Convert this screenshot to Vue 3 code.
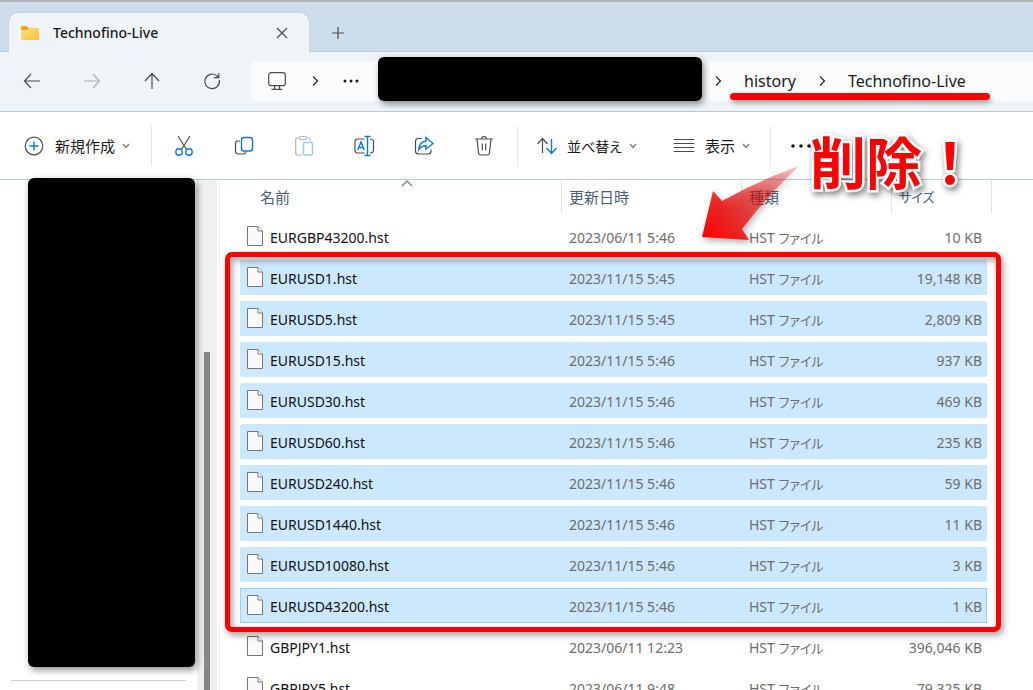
<template>
  <div class="explorer">
    <header class="tab-bar">
      <div class="tab">
        <svg class="folder" width="20" height="18" viewBox="0 0 20 18">
          <path d="M1 3.500Q1 2 2.500 2H6.500L9 4.500H17.500Q19 4.500 19 6V8H1Z" fill="#f0a30a" />
          <path d="M1 6H7L9 4.500H17.500Q19 4.500 19 6V14.500Q19 16 17.500 16H2.500Q1 16 1 14.500Z" fill="url(#folderFill)" />
          <defs>
            <linearGradient id="folderFill" x1="0" y1="0" x2="1" y2="1">
              <stop offset="0" stop-color="#ffe083" />
              <stop offset="1" stop-color="#fcbf36" />
            </linearGradient>
          </defs>
        </svg>
        <span class="tab-title">Technofino-Live</span>
        <button class="icon-btn close" aria-label="タブを閉じる">
          <svg width="12" height="12" viewBox="0 0 12 12"><path d="M1 1L11 11M11 1L1 11" /></svg>
        </button>
      </div>
      <button class="icon-btn add" aria-label="新しいタブ">
        <svg width="14" height="14" viewBox="0 0 14 14"><path d="M7 1V13M1 7H13" /></svg>
      </button>
    </header>

    <nav class="nav-bar">
      <div class="nav-buttons">
        <button class="icon-btn" aria-label="戻る">
          <svg width="18" height="18" viewBox="0 0 18 18"><path d="M17 9H2M8 2L1.500 9L8 16" /></svg>
        </button>
        <button class="icon-btn" aria-label="進む" disabled>
          <svg width="18" height="18" viewBox="0 0 18 18"><path d="M1 9H16M10 2L16.500 9L10 16" /></svg>
        </button>
        <button class="icon-btn" aria-label="上へ">
          <svg width="18" height="18" viewBox="0 0 18 18"><path d="M9 17V2M2 9L9 1.500L16 9" /></svg>
        </button>
        <button class="icon-btn" aria-label="更新">
          <svg width="18" height="18" viewBox="0 0 18 18"><path d="M16.300 8A7.300 7.300 0 1 1 13.500 3.500L15.500 5.500M15.800 1V5.700H11" /></svg>
        </button>
      </div>
      <div class="address">
        <svg class="pc" width="20" height="20" viewBox="0 0 20 20">
          <rect x="1.700" y="1.700" width="16.600" height="13" rx="2.500" />
          <path d="M7.500 15V18M12.500 15V18M4.500 18.300H15.500" />
        </svg>
        <svg class="sep" width="8" height="12" viewBox="0 0 8 12"><path d="M2 1.500L6.500 6L2 10.500" /></svg>
        <svg class="dots" width="16" height="4" viewBox="0 0 16 4"><circle cx="2" cy="2" r="1.500" /><circle cx="8" cy="2" r="1.500" /><circle cx="14" cy="2" r="1.500" /></svg>
        <div class="mask path-mask"></div>
        <svg class="sep" width="8" height="12" viewBox="0 0 8 12"><path d="M2 1.500L6.500 6L2 10.500" /></svg>
        <div class="crumbs">
          <a href="#">history</a>
          <svg class="sep" width="8" height="12" viewBox="0 0 8 12"><path d="M2 1.500L6.500 6L2 10.500" /></svg>
          <a href="#">Technofino-Live</a>
          <span class="underline"></span>
        </div>
      </div>
    </nav>

    <div class="toolbar">
      <button class="tool-btn new">
        <svg width="20" height="20" viewBox="0 0 20 20">
          <circle cx="10" cy="10" r="8.800" />
          <path class="blue" d="M10 5.500V14.500M5.500 10H14.500" />
        </svg>
        <span>新規作成</span>
        <svg class="caret" width="8" height="6" viewBox="0 0 8 6"><path d="M1 1L4 4.500L7 1" /></svg>
      </button>
      <span class="divider"></span>
      <div class="actions">
        <button class="icon-btn" aria-label="切り取り">
          <svg width="20" height="22" viewBox="0 0 20 22">
            <path d="M4 1L12.500 14.500M16 1L7.500 14.500" />
            <circle class="blue" cx="5" cy="17" r="3.200" />
            <circle class="blue" cx="15" cy="17" r="3.200" />
          </svg>
        </button>
        <button class="icon-btn" aria-label="コピー">
          <svg width="20" height="22" viewBox="0 0 20 22">
            <path d="M6 6H4Q1.500 6 1.500 8.500V16Q1.500 19 4.500 19H9Q11.500 19 12 16.500" />
            <rect class="blue" x="7.500" y="2.500" width="11" height="13.500" rx="2.500" />
          </svg>
        </button>
        <button class="icon-btn" aria-label="貼り付け" disabled>
          <svg width="20" height="22" viewBox="0 0 20 22">
            <path d="M8 20H3.500Q1.700 20 1.700 18V5Q1.700 3 3.500 3H5.500M12.500 3H14.500Q16.300 3 16.300 5V6" />
            <rect x="5.500" y="1.500" width="7" height="3" rx="1.500" />
            <rect class="blue" x="9.500" y="7.500" width="9" height="12.500" rx="1.500" />
          </svg>
        </button>
        <button class="icon-btn" aria-label="名前の変更">
          <svg width="22" height="22" viewBox="0 0 22 22">
            <path d="M11.500 18H4.500Q2 18 2 15.500V6.500Q2 4 4.500 4H11.500M17 4Q20.500 4 20.500 7V15Q20.500 18 17 18" />
            <path class="blue" d="M4.800 15L8 7L11.200 15M6 12.500H10M14.500 1.500V20.500M11.500 1.500H17.500M11.500 20.500H17.500" />
          </svg>
        </button>
        <button class="icon-btn" aria-label="共有">
          <svg width="20" height="22" viewBox="0 0 20 22">
            <path d="M8 3.500H4.500Q1.500 3.500 1.500 6.500V16Q1.500 19 4.500 19H14Q17 19 17 16V14.500" />
            <path class="blue" d="M12 2.500L19 8.500L12 14V10.700Q7.500 10.500 4.800 14.500Q5.300 7 12 6Z" />
          </svg>
        </button>
        <button class="icon-btn" aria-label="削除">
          <svg width="20" height="22" viewBox="0 0 20 22">
            <path d="M1 4H19M3 4L4.500 17.500Q4.800 20 7 20H13Q15.200 20 15.500 17.500L17 4M7.500 4Q7.500 1.500 10 1.500Q12.500 1.500 12.500 4M8.300 8.500V15.500M11.700 8.500V15.500" />
          </svg>
        </button>
      </div>
      <span class="divider"></span>
      <button class="tool-btn sort">
        <svg width="22" height="18" viewBox="0 0 22 18">
          <path d="M6.500 16V2M1.500 7L6.500 1.500L11.500 7" />
          <path class="blue" d="M15.500 2V16M10.500 11L15.500 16.500L20.500 11" />
        </svg>
        <span>並べ替え</span>
        <svg class="caret" width="8" height="6" viewBox="0 0 8 6"><path d="M1 1L4 4.500L7 1" /></svg>
      </button>
      <button class="tool-btn view">
        <svg width="20" height="14" viewBox="0 0 20 14"><path d="M0 .5H20M0 4.500H20M0 8.500H20M0 12.500H20" /></svg>
        <span>表示</span>
        <svg class="caret" width="8" height="6" viewBox="0 0 8 6"><path d="M1 1L4 4.500L7 1" /></svg>
      </button>
      <span class="divider"></span>
      <button class="icon-btn more" aria-label="もっと見る">
        <svg class="dots" width="20" height="4" viewBox="0 0 20 4"><circle cx="2" cy="2" r="1.800" /><circle cx="10" cy="2" r="1.800" /><circle cx="18" cy="2" r="1.800" /></svg>
      </button>
    </div>

    <div class="content">
      <aside class="sidebar">
        <div class="mask side-mask"></div>
        <hr>
      </aside>
      <div class="scrollbar"><div class="thumb"></div></div>
      <main class="files">
        <table>
          <thead>
            <tr>
              <th class="name">
                名前
                <svg class="sort-mark" width="12" height="7" viewBox="0 0 12 7"><path d="M1 6L6 1L11 6" /></svg>
              </th>
              <th class="date">更新日時</th>
              <th class="type">種類</th>
              <th class="size"><span class="kana">サイズ</span></th>
            </tr>
          </thead>
          <tbody>
            <tr
              v-for="file in files"
              :key="file.name"
              :class="{ selected: file.selected, focused: file.name === focused }"
            >
              <td class="name">
                <div class="file-name">
                  <svg width="17" height="20" viewBox="0 0 17 20">
                    <path d="M.5.500H11L15.500 5V19.500H.5Z" />
                    <path d="M11 .5V5H15.500" />
                  </svg>
                  <span>{{ file.name }}</span>
                </div>
              </td>
              <td class="date">{{ file.date }}</td>
              <td class="type">HST <span class="kana">ファイル</span></td>
              <td class="size">{{ file.size }} KB</td>
            </tr>
          </tbody>
        </table>
        <div class="frame"></div>
        <svg class="arrow" width="110" height="84" viewBox="0 0 110 84">
          <defs>
            <linearGradient id="arrowFill" gradientUnits="userSpaceOnUse" x1="6" y1="74" x2="102" y2="3">
              <stop offset="0" stop-color="#f00" />
              <stop offset=".3" stop-color="#f01010" stop-opacity=".85" />
              <stop offset="1" stop-color="#d00" stop-opacity=".2" />
            </linearGradient>
          </defs>
          <path d="M6 75L17 29L26 39Q63 18 103 4Q73 32 46 67L53 78Z" fill="url(#arrowFill)" />
        </svg>
        <strong class="note">削除！</strong>
      </main>
    </div>
  </div>
</template>

<script setup>
const focused = 'EURUSD43200.hst'

const files = [
  { name: 'EURGBP43200.hst', date: '2023/06/11 5:46', size: '10', selected: false },
  { name: 'EURUSD1.hst', date: '2023/11/15 5:45', size: '19,148', selected: true },
  { name: 'EURUSD5.hst', date: '2023/11/15 5:45', size: '2,809', selected: true },
  { name: 'EURUSD15.hst', date: '2023/11/15 5:46', size: '937', selected: true },
  { name: 'EURUSD30.hst', date: '2023/11/15 5:46', size: '469', selected: true },
  { name: 'EURUSD60.hst', date: '2023/11/15 5:46', size: '235', selected: true },
  { name: 'EURUSD240.hst', date: '2023/11/15 5:46', size: '59', selected: true },
  { name: 'EURUSD1440.hst', date: '2023/11/15 5:46', size: '11', selected: true },
  { name: 'EURUSD10080.hst', date: '2023/11/15 5:46', size: '3', selected: true },
  { name: 'EURUSD43200.hst', date: '2023/11/15 5:46', size: '1', selected: true },
  { name: 'GBPJPY1.hst', date: '2023/06/11 12:23', size: '396,046', selected: false },
  { name: 'GBPJPY5.hst', date: '2023/06/11 9:48', size: '79,325', selected: false },
]
</script>

<style>
body {
  margin: 0;
  background: #fff;
}
</style>

<style scoped>
.explorer {
  display: flex;
  flex-direction: column;
  height: 100vh;
  overflow: hidden;
  font-family: "Noto Sans", "Noto Sans CJK JP", sans-serif;
  font-size: 14px;
  color: #1b1b1b;
}

svg {
  flex: none;
  fill: none;
  stroke: #4c4c4c;
  stroke-width: 1.2;
}

button {
  display: flex;
  align-items: center;
  padding: 0;
  border: none;
  background: none;
  font: inherit;
  color: inherit;
  cursor: pointer;
}

.icon-btn {
  justify-content: center;
}

.icon-btn:disabled {
  opacity: 0.4;
}

.blue {
  stroke: #0f78d4;
  stroke-width: 1.4;
}

.dots {
  fill: #1b1b1b;
  stroke: none;
}

.mask {
  background: #000;
  border-radius: 6px;
  box-shadow: 2px 3px 7px rgba(0, 0, 0, 0.45);
}

/* tabs */
.tab-bar {
  display: flex;
  align-items: flex-end;
  flex: none;
  height: 52px;
  padding-left: 9px;
  box-sizing: border-box;
  border-top: 2px solid #b4b4b4;
  background: #cdddeb;
  box-shadow: inset 0 -1px #b9cbda;
}

.tab {
  display: flex;
  align-items: center;
  width: 300px;
  height: 39px;
  padding: 0 21px 0 11px;
  box-sizing: border-box;
  border-radius: 9px 9px 0 0;
  background: #eff4f9;
  box-shadow: 0 0 2px #b4c5d4;
}

.folder {
  stroke: none;
}

.tab-title {
  flex: 1;
  margin-left: 13px;
  font-weight: 500;
}

.add {
  width: 40px;
  height: 38px;
  margin-left: 9px;
}

/* navigation */
.nav-bar {
  display: flex;
  align-items: center;
  flex: none;
  height: 60px;
  padding-bottom: 1px;
  box-sizing: border-box;
  border-bottom: 1px solid #b8c9d8;
  background: #eff4f9;
}

.nav-buttons {
  display: flex;
  width: 250px;
  padding-left: 2px;
  box-sizing: border-box;
}

.nav-buttons .icon-btn {
  width: 60px;
  height: 40px;
}

.address {
  display: flex;
  align-items: center;
  flex: 1;
  height: 40px;
  padding-left: 17px;
  border-radius: 6px 0 0 6px;
  background: #fbfcfe;
}

.pc {
  margin-right: 24px;
}

.sep {
  stroke: #222;
}

.address > .dots {
  margin: 0 19px 0 24px;
}

.path-mask {
  width: 324px;
  height: 44px;
  margin: 0 12px 4px 0;
}

.crumbs {
  position: relative;
  display: flex;
  align-items: center;
  gap: 22px;
  height: 40px;
  margin-left: 22px;
  font-size: 16px;
}

.crumbs a {
  color: inherit;
  text-decoration: none;
}

.underline {
  position: absolute;
  left: -14px;
  right: -24px;
  bottom: 1px;
  height: 7px;
  border-radius: 4px;
  background: #f00;
  box-shadow: 1px 3px 5px rgba(0, 0, 0, 0.35);
}

/* commands */
.toolbar {
  display: flex;
  align-items: center;
  flex: none;
  height: 68px;
  box-sizing: border-box;
  border-bottom: 1px solid #b8c9d8;
  background: #fff;
}

.tool-btn {
  font-size: 15px;
  font-feature-settings: "palt";
}

.tool-btn span {
  margin: 0 7px 0 11px;
  white-space: nowrap;
}

.new {
  width: 151px;
  padding-left: 24px;
}

.divider {
  width: 1px;
  height: 40px;
  background: #e5e5e5;
}

.actions {
  display: flex;
  width: 365px;
  padding-left: 2px;
  box-sizing: border-box;
}

.actions .icon-btn {
  width: 60px;
  height: 40px;
}

.sort {
  width: 138px;
  padding-left: 18px;
  font-size: 14px;
}

.sort span {
  margin-left: 9px;
}

.view {
  width: 114px;
  padding-left: 18px;
}

.caret {
  stroke: #777;
}

.more {
  margin-left: 20px;
}

/* body */
.content {
  display: flex;
  flex: 1;
  min-height: 0;
}

.sidebar {
  display: flex;
  flex-direction: column;
  width: 197px;
}

.side-mask {
  position: relative;
  flex: 1;
  margin: -2px 2px 0 28px;
}

.sidebar hr {
  width: 175px;
  height: 1px;
  margin: 13px 0 9px 11px;
  border: none;
  background: #d0d0d0;
}

.scrollbar {
  display: flex;
  flex: none;
  width: 20px;
  justify-content: center;
  box-sizing: border-box;
  padding-top: 172px;
  background: #efefef;
}

.thumb {
  width: 6px;
  background: #858585;
}

.files {
  position: relative;
  flex: 1;
  padding: 0 46px 0 20px;
  margin-left: 2px;
  border-left: 1px solid #f0f0f0;
}

table {
  width: 100%;
  margin-top: -6px;
  border-collapse: separate;
  border-spacing: 0 6px;
  table-layout: fixed;
  line-height: 20px;
  font-feature-settings: "palt";
}

th {
  position: relative;
  height: 33px;
  padding: 0 0 0 7px;
  box-sizing: border-box;
  border-right: 1px solid #e2e2e2;
  font-size: 15px;
  font-weight: 400;
  text-align: left;
  color: #4c607a;
}

th.name {
  padding-left: 20px;
}

th.size {
  border-right: none;
}

th.size::after {
  content: "";
  position: absolute;
  top: 0;
  right: -5px;
  width: 1px;
  height: 33px;
  background: #e2e2e2;
}

.date {
  width: 180px;
}

.type {
  width: 150px;
}

.size {
  width: 95px;
}

.kana {
  font-size: 13px;
}

.sort-mark {
  position: absolute;
  top: 0;
  left: 50%;
  stroke: #777;
}

td {
  height: 35px;
  padding: 2px 0 0 7px;
  box-sizing: border-box;
  color: #6d6d6d;
  white-space: nowrap;
}

td.name {
  color: #111;
}

td.size {
  padding: 2px 5px 0 0;
  text-align: right;
}

.file-name {
  display: flex;
  align-items: center;
  gap: 6px;
}

.file-name svg {
  margin-bottom: 3px;
  fill: #fafafa;
  stroke: #777;
  stroke-width: 1;
}

.selected td {
  background: #cce8ff;
}

.selected td:first-child {
  border-radius: 2px 0 0 2px;
}

.selected td:last-child {
  border-radius: 0 2px 2px 0;
}

.focused {
  outline: 1px solid #99d1ff;
  outline-offset: -1px;
}

/* annotations drawn over the list */
.frame {
  position: absolute;
  top: 72px;
  left: 5px;
  right: 32px;
  height: 380px;
  box-sizing: border-box;
  border: 5px solid #f00;
  border-radius: 7px;
  filter: drop-shadow(2px 3px 3px rgba(0, 0, 0, 0.45));
}

.arrow {
  position: absolute;
  top: -18px;
  right: 227px;
  stroke: none;
  filter: drop-shadow(2px 3px 3px rgba(0, 0, 0, 0.35));
}

.note {
  position: absolute;
  top: -48px;
  right: 55px;
  font-family: "Noto Sans CJK JP", sans-serif;
  font-size: 56px;
  line-height: 56px;
  color: #f00;
  -webkit-text-stroke: 5px #fff;
  paint-order: stroke fill;
  filter: drop-shadow(2px 3px 3px rgba(0, 0, 0, 0.5));
}
</style>
